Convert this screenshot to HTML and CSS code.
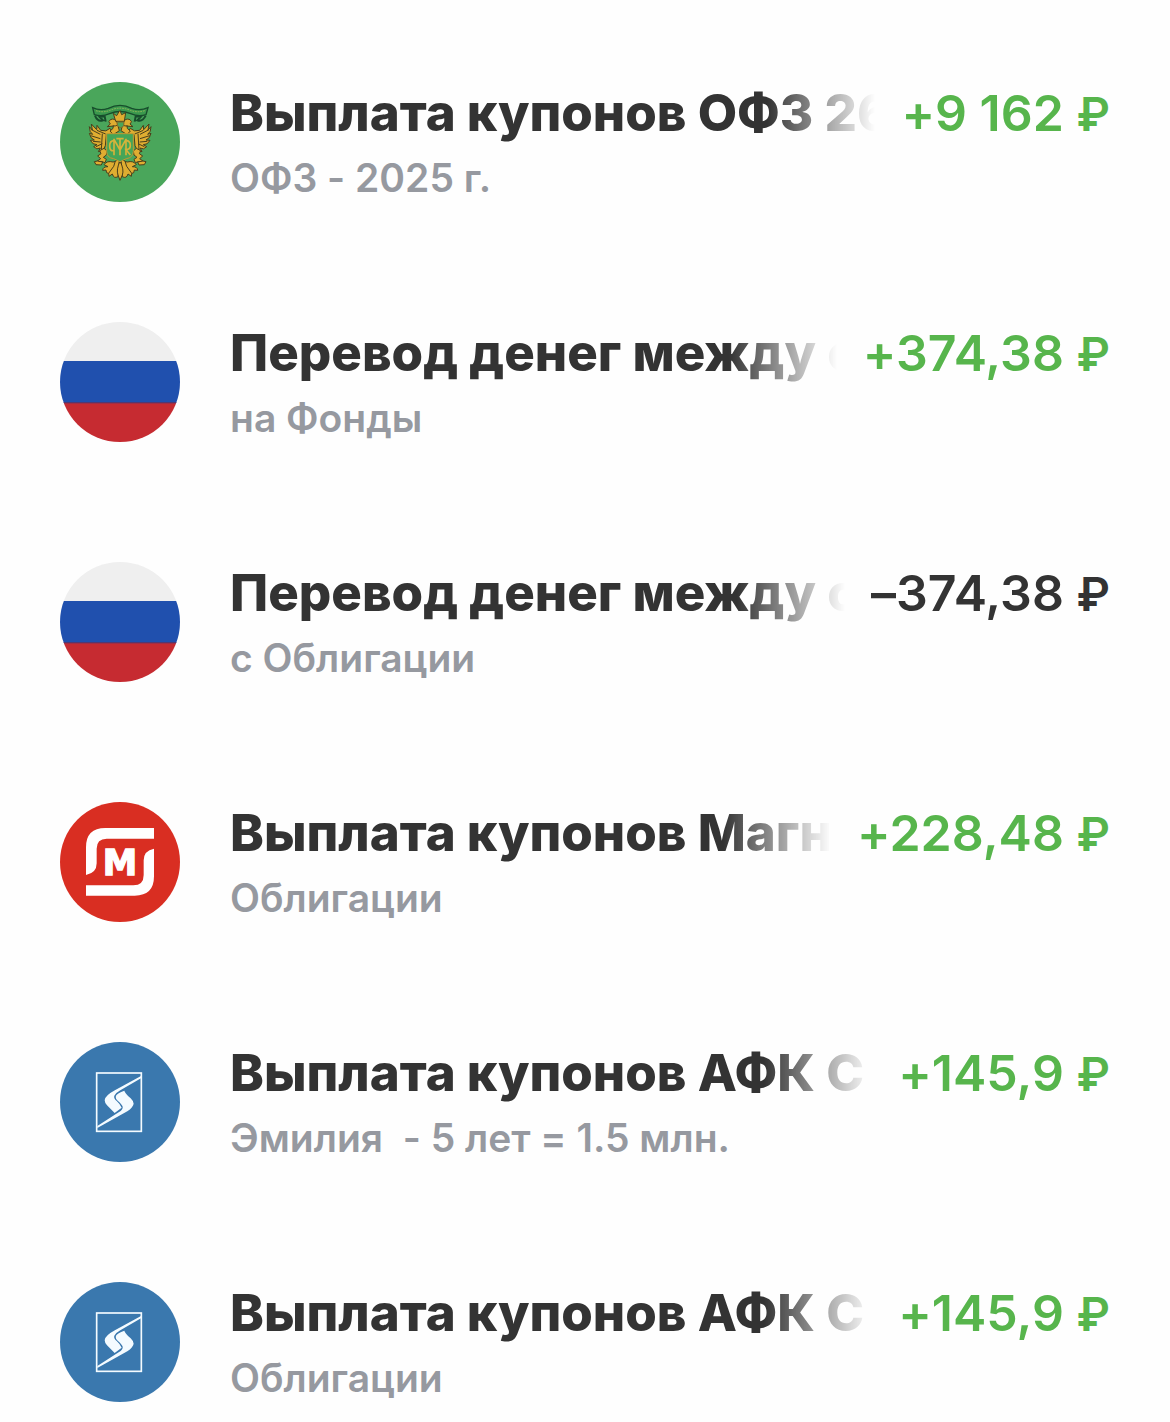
FILE: index.html
```html
<!DOCTYPE html>
<html lang="ru">
<head>
    <meta charset="UTF-8">
    <meta name="viewport" content="width=device-width, initial-scale=1.0">
    <title>Операции</title>
    <link rel="stylesheet" href="styles.css">
</head>
<body>
    <!-- shared logos -->
    <svg class="sprite" aria-hidden="true">
        <symbol id="flag" viewBox="0 0 360 360">
            <rect width="360" height="118" fill="#efefef"/>
            <rect y="117" width="360" height="126" fill="#2050ae"/>
            <rect y="243" width="360" height="117" fill="#c62b31"/>
            <rect y="240" width="360" height="4" fill="#54376f"/>
        </symbol>
        <symbol id="afk" viewBox="0 0 360 360">
            <rect width="360" height="360" fill="#3a78ae"/>
            <rect x="110" y="93" width="134" height="175" fill="none" stroke="#f4fbff" stroke-width="5"/>
            <path d="M243 102 L166 144 Q134 161 134 175 Q134 182 141 190 L164 213 L185 197 Q182 188 170 177 Q160 168 163 161 Q167 153 181 145 L243 109Z" fill="#f4fbff"/>
            <path d="M112 252 L176 211 Q190 202 188 194 Q187 189 174 177 Q165 169 168 161 Q172 154 193 146 Q194 153 212 169 Q221 178 221 185 Q219 196 202 208 L112 258Z" fill="#f4fbff"/>
        </symbol>
    </svg>

    <ul class="operations">
        <li class="operation">
            <svg class="logo" viewBox="0 0 360 360" aria-hidden="true">
                <rect width="360" height="360" fill="#4aa65b"/>
                <!-- ribbon -->
                <path d="M98 77 Q120 88 145 79 Q180 61 215 79 Q240 88 264 77 L258 98 Q236 105 212 95 Q180 82 149 95 Q126 105 103 98Z" fill="#3a984d" stroke="#174d2c" stroke-width="4"/>
                <path d="M108 86 Q130 93 150 85 Q180 72 211 85 Q232 93 254 86" fill="none" stroke="#94b75a" stroke-width="3" stroke-dasharray="5 3"/>
                <path d="M105 101 Q113 121 129 115 L119 105 L134 103 L137 119 M257 101 Q247 121 232 115 L242 105 L227 103 L224 119" fill="none" stroke="#174d2c" stroke-width="6"/>
                <g fill="#dfad31" stroke="#493f1c" stroke-width="3" stroke-linejoin="round">
                    <!-- wings -->
                    <g id="wing">
                        <path d="M150 139 Q139 151 122 145 L111 130 L110 143 L94 126 L97 144 L88 134 Q88 151 98 157 L88 154 Q91 170 103 174 L91 175 Q98 189 111 188 L101 194 Q110 205 121 198 L115 209 Q130 208 136 191 L139 158 L160 156Z"/>
                        <path d="M94 143 L121 157 M92 161 L121 170 M99 178 L122 180 M108 194 L127 185 M127 155 L124 203 M111 145 L137 156" fill="none"/>
                        <path d="M178 119 Q174 133 160 132 L142 134 L151 126 Q142 119 151 113 Q165 107 171 121 L178 146 L160 158 L150 147 Q163 140 160 130"/>
                        <path d="M132 199 L141 207 L139 219 L130 226 L139 232 L135 242 L126 239 L111 238 L122 230 L113 222 L123 215 L119 206Z"/>
                        <path d="M112 237 L128 240 L124 249 L108 248 L103 239Z"/>
                        <path d="M177 236 Q166 265 147 275 Q137 274 138 264 L128 265 Q128 254 144 254 L132 248 Q141 235 159 240Z"/>
                        <path d="M178 233 L174 284 Q161 291 157 276 L147 283 Q142 274 153 264 Q163 255 166 237Z"/>
                    </g>
                    <use href="#wing" transform="translate(361 0) scale(-1 1)"/>
                    <path d="M180 237 Q168 263 174 279 L180 295 L187 279 Q193 263 180 237Z"/>
                    <!-- crown -->
                    <path d="M160 94 L170 101 L177 89 L180 86 L185 98 L197 92 L193 118 L167 118Z"/>
                </g>
                <path d="M171 120 L192 120 L191 132 Q180 142 173 131Z" fill="#4aa65b" stroke="#866d27" stroke-width="3"/>
                <path d="M140 155 H220 V209 Q219 227 199 230 L180 239 L161 230 Q140 227 140 209Z" fill="#45a557" stroke="#c59a30" stroke-width="3"/>
                <!-- monogram -->
                <g fill="none" stroke="#d4b33b" stroke-width="5">
                    <path d="M180 167 V220 M169 170 H191 M162 170 V220 M198 170 V220 M162 172 L180 204 L198 172"/>
                    <path d="M162 176 Q149 176 149 192 Q149 208 162 206 M198 176 Q211 176 211 190 Q211 203 198 203 L211 219"/>
                </g>
            </svg>
            <div class="info">
                <div class="title">Выплата купонов ОФЗ 26</div>
                <div class="subtitle">ОФЗ - 2025 г.</div>
            </div>
            <div class="amount income">+9 162 <span class="currency">₽</span></div>
        </li>

        <li class="operation">
            <svg class="logo" aria-hidden="true"><use href="#flag"/></svg>
            <div class="info">
                <div class="title">Перевод денег между с</div>
                <div class="subtitle">на Фонды</div>
            </div>
            <div class="amount income">+374,38 <span class="currency">₽</span></div>
        </li>

        <li class="operation">
            <svg class="logo" aria-hidden="true"><use href="#flag"/></svg>
            <div class="info">
                <div class="title">Перевод денег между с</div>
                <div class="subtitle">с Облигации</div>
            </div>
            <div class="amount">–374,38 <span class="currency">₽</span></div>
        </li>

        <li class="operation">
            <svg class="logo" viewBox="0 0 360 360" aria-hidden="true">
                <rect width="360" height="360" fill="#d92e22"/>
                <path d="M282 78 H136 Q78 78 78 136 V219 Q110 213 110 184 V140 Q110 110 140 110 H282Z" fill="#fff"/>
                <path d="M78 281 H224 Q282 281 282 223 V140 Q251 146 251 175 V219 Q251 250 220 250 H78Z" fill="#fff"/>
                <text class="logo-letter" x="180" y="218">M</text>
            </svg>
            <div class="info">
                <div class="title">Выплата купонов Магн</div>
                <div class="subtitle">Облигации</div>
            </div>
            <div class="amount income">+228,48 <span class="currency">₽</span></div>
        </li>

        <li class="operation">
            <svg class="logo" aria-hidden="true"><use href="#afk"/></svg>
            <div class="info">
                <div class="title">Выплата купонов АФК С</div>
                <div class="subtitle">Эмилия&nbsp; - 5 лет = 1.5 млн.</div>
            </div>
            <div class="amount income">+145,9 <span class="currency">₽</span></div>
        </li>

        <li class="operation">
            <svg class="logo" aria-hidden="true"><use href="#afk"/></svg>
            <div class="info">
                <div class="title">Выплата купонов АФК С</div>
                <div class="subtitle">Облигации</div>
            </div>
            <div class="amount income">+145,9 <span class="currency">₽</span></div>
        </li>
    </ul>
</body>
</html>
```

FILE: styles.css
```css
body {
    margin: 0;
    background-color: #fefefe;
    color: #333;
    font-family: Inter, "Liberation Sans", sans-serif;
    font-variant-ligatures: no-contextual;
}
.sprite {
    display: none;
}
.operations {
    display: flex;
    flex-direction: column;
    gap: 120px;
    margin: 0;
    padding: 82px 60px 20px;
    list-style: none;
}
.operation {
    display: flex;
    align-items: flex-start;
}
.logo {
    flex: none;
    width: 120px;
    height: 120px;
    margin-right: 50px;
    border-radius: 50%;
}
.logo-letter {
    fill: #fff;
    stroke: #fff;
    stroke-width: 4px;
    font-family: "DejaVu Sans", sans-serif;
    font-size: 104px;
    font-weight: bold;
    text-anchor: middle;
}
.info {
    flex: 1;
    min-width: 0;
}
.title {
    overflow: hidden;
    font-size: 51px;
    font-weight: 800;
    line-height: 62px;
    white-space: nowrap;
    mask-image: linear-gradient(to left, transparent, #000 108px);
}
.subtitle {
    margin-top: 10px;
    color: #9699a0;
    font-size: 39px;
    font-weight: 600;
    line-height: 48px;
    white-space: nowrap;
}
.amount {
    flex: none;
    margin-left: 26px;
    font-size: 50px;
    font-weight: 600;
    line-height: 62px;
    white-space: nowrap;
}
.income {
    color: #57b54c;
}
.currency {
    font-size: 46px;
}
```
